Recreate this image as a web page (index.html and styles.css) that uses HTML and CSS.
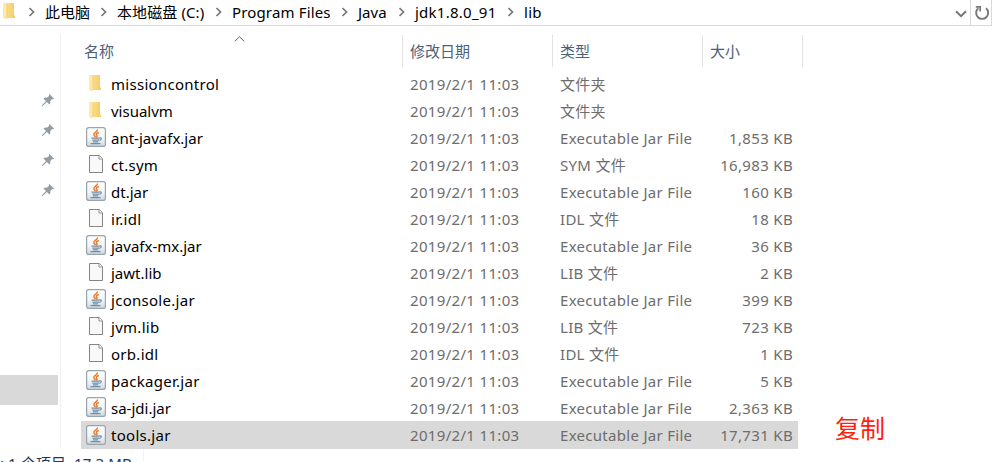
FILE: index.html
```html
<!DOCTYPE html>
<html lang="zh-CN">
<head>
<meta charset="utf-8">
<title>lib</title>
<link rel="stylesheet" href="styles.css">
</head>
<body>
<svg class="defs" aria-hidden="true">
  <defs>
    <linearGradient id="gold" x1="0" x2="1" y1="0" y2="0"><stop offset="0" stop-color="#fde397"/><stop offset="1" stop-color="#f3cc66"/></linearGradient>
    <linearGradient id="tile" x1="0" x2="0" y1="0" y2="1"><stop offset="0" stop-color="#ffffff"/><stop offset=".55" stop-color="#f3f5f6"/><stop offset="1" stop-color="#cfd7dc"/></linearGradient>
  </defs>
  <symbol id="folder" viewBox="0 0 20 20">
    <path d="M4 2h10v12.500h1V17H4z" fill="url(#gold)"/>
    <path d="M3 1.500l4 1.700v13L5 18.500 3 16.500z" fill="#ffe9a6"/>
    <path d="M7 3.200v13L5.300 18" fill="none" stroke="#e9c35c" stroke-width=".6"/>
  </symbol>
  <symbol id="jar" viewBox="0 0 20 20">
    <rect x=".6" y=".6" width="18.800" height="18.800" rx="2.200" fill="url(#tile)" stroke="#98a5b1" stroke-width="1.200"/>
    <path d="M11.300 2.500c1 2-4.300 3.200-3.400 5.300.3 1 1.100 1.500 1.700 2.200M12.800 5.500c-2.300.9-3.200 1.800-2 3 .6.800 0 1.500-.6 1.800" fill="none" stroke="#ec7426" stroke-width="1.400"/>
    <path d="M5.500 11.200h8.200M6.300 13.100h6.700M7 14.900h5.200M4.500 16.700h10M13.700 10.800c2.400-.5 2 2-.4 2.500" fill="none" stroke="#6f8fa8" stroke-width="1.200"/>
  </symbol>
  <symbol id="file" viewBox="0 0 20 20">
    <path d="M3.500 1.500h9.800l3.200 3.200v13.800h-13z" fill="#f9f9f9" stroke="#858585"/>
    <path d="M13 1.500V5h3.500" fill="#fff" stroke="#858585" stroke-width=".9"/>
  </symbol>
  <symbol id="pin" viewBox="0 0 14 14">
    <path d="M8.200.8l5 5-1.500.4-.6-.1-1.900 2.100c.4 1.300.2 2.400-.8 3.300L5.900 9 1.600 13 .8 13.200 1 12.300 5 8.100 2.500 5.600c.9-1 2-1.200 3.300-.8L8 2.900z" fill="#929ca5"/>
  </symbol>
  <symbol id="chev" viewBox="0 0 8 10"><path d="M1.500 1l4 4-4 4" fill="none" stroke="#777" stroke-width="1.700"/></symbol>
</svg>
<div class="window">
  <header class="address">
    <svg class="address-folder"><use href="#folder"/></svg>
    <nav class="crumbs">
      <span class="crumb c1"><svg><use href="#chev"/></svg><b>此电脑</b></span>
      <span class="crumb c2"><svg><use href="#chev"/></svg><b>本地磁盘 (C:)</b></span>
      <span class="crumb c3"><svg><use href="#chev"/></svg><b>Program Files</b></span>
      <span class="crumb c4"><svg><use href="#chev"/></svg><b>Java</b></span>
      <span class="crumb c5"><svg><use href="#chev"/></svg><b>jdk1.8.0_91</b></span>
      <span class="crumb c6"><svg><use href="#chev"/></svg><b>lib</b></span>
    </nav>
    <svg class="history" viewBox="0 0 12 8"><path d="M1 1.200l5 5 5-5" fill="none" stroke="#777" stroke-width="2"/></svg>
    <div class="refresh"><svg viewBox="0 0 16 16"><path d="M12 3.300A6 6 0 1 1 4.300 3.300" fill="none" stroke="#777" stroke-width="1.900"/><path d="M1.800 1.900h4.400v4.500" fill="none" stroke="#777" stroke-width="1.700"/></svg></div>
  </header>
  <div class="main">
    <aside class="sidebar">
      <svg><use href="#pin"/></svg><svg><use href="#pin"/></svg><svg><use href="#pin"/></svg><svg><use href="#pin"/></svg>
      <div class="side-selected"></div>
    </aside>
    <section class="files">
      <div class="head">
        <span class="h-name">名称<svg viewBox="0 0 11 6"><path d="M.8 5.300l4.700-4.500 4.700 4.500" fill="none" stroke="#666"/></svg></span><span>修改日期</span><span>类型</span><span class="h-size">大小</span>
      </div>
      <div class="row"><svg><use href="#folder"/></svg><span class="name wide">missioncontrol</span><span class="date">2019/2/1 11:03</span><span class="type">文件夹</span><span class="size"></span></div>
      <div class="row"><svg><use href="#folder"/></svg><span class="name">visualvm</span><span class="date">2019/2/1 11:03</span><span class="type">文件夹</span><span class="size"></span></div>
      <div class="row"><svg><use href="#jar"/></svg><span class="name">ant-javafx.jar</span><span class="date">2019/2/1 11:03</span><span class="type">Executable Jar File</span><span class="size">1,853 KB</span></div>
      <div class="row"><svg><use href="#file"/></svg><span class="name wide">ct.sym</span><span class="date">2019/2/1 11:03</span><span class="type">SYM 文件</span><span class="size">16,983 KB</span></div>
      <div class="row"><svg><use href="#jar"/></svg><span class="name">dt.jar</span><span class="date">2019/2/1 11:03</span><span class="type">Executable Jar File</span><span class="size">160 KB</span></div>
      <div class="row"><svg><use href="#file"/></svg><span class="name wide">ir.idl</span><span class="date">2019/2/1 11:03</span><span class="type">IDL 文件</span><span class="size">18 KB</span></div>
      <div class="row"><svg><use href="#jar"/></svg><span class="name">javafx-mx.jar</span><span class="date">2019/2/1 11:03</span><span class="type">Executable Jar File</span><span class="size">36 KB</span></div>
      <div class="row"><svg><use href="#file"/></svg><span class="name">jawt.lib</span><span class="date">2019/2/1 11:03</span><span class="type">LIB 文件</span><span class="size">2 KB</span></div>
      <div class="row"><svg><use href="#jar"/></svg><span class="name wide">jconsole.jar</span><span class="date">2019/2/1 11:03</span><span class="type">Executable Jar File</span><span class="size">399 KB</span></div>
      <div class="row"><svg><use href="#file"/></svg><span class="name wide">jvm.lib</span><span class="date">2019/2/1 11:03</span><span class="type">LIB 文件</span><span class="size">723 KB</span></div>
      <div class="row"><svg><use href="#file"/></svg><span class="name wide">orb.idl</span><span class="date">2019/2/1 11:03</span><span class="type">IDL 文件</span><span class="size">1 KB</span></div>
      <div class="row"><svg><use href="#jar"/></svg><span class="name wide">packager.jar</span><span class="date">2019/2/1 11:03</span><span class="type">Executable Jar File</span><span class="size">5 KB</span></div>
      <div class="row"><svg><use href="#jar"/></svg><span class="name">sa-jdi.jar</span><span class="date">2019/2/1 11:03</span><span class="type">Executable Jar File</span><span class="size">2,363 KB</span></div>
      <div class="row selected"><svg><use href="#jar"/></svg><span class="name wide">tools.jar</span><span class="date">2019/2/1 11:03</span><span class="type">Executable Jar File</span><span class="size">17,731 KB</span></div>
    </section>
    <div class="note">复制</div>
  </div>
  <footer class="status"><span>: 1 个项目&nbsp; 17.3 MB</span></footer>
</div>
</body>
</html>
```
FILE: styles.css
```css
* { box-sizing: border-box; }
body {
  margin: 0;
  background: #fff;
  font-family: "Noto Sans", "Noto Sans CJK SC", sans-serif;
  font-size: 15px;
  color: #000;
}
.defs { position: absolute; width: 0; height: 0; }
.window { width: 1001px; height: 462px; overflow: hidden; display: flex; flex-direction: column; }
svg { display: block; flex: none; }

.address {
  width: 992px;
  height: 26px;
  flex: none;
  display: flex;
  align-items: center;
  border-bottom: 1px solid #d9d9d9;
  border-right: 1px solid #d9d9d9;
}
.address-folder { width: 20px; height: 20px; margin: -3px 0 0; }
.crumbs { display: flex; flex: 1; height: 25px; padding-left: 8px; }
.crumb { display: flex; align-items: center; height: 23px; white-space: nowrap; }
.crumb svg { width: 8px; height: 10px; margin-right: 9px; }
.crumb b { font-weight: 400; }
.c1 { width: 72px; }
.c2 { width: 115px; }
.c3 { width: 126px; }
.c4 { width: 57px; }
.c5 { width: 109px; }
.c6 { width: 60px; }
.c2 b { letter-spacing: .1px; }
.c3 b { letter-spacing: .15px; }
.c5 b { letter-spacing: .25px; }
.c6 b { letter-spacing: .3px; }
.history { width: 12px; height: 8px; margin: 2px 3px 0 0; }
.refresh { width: 21px; height: 25px; border-left: 1px solid #d9d9d9; padding: 5px 0 0 3px; }
.refresh svg { width: 16px; height: 16px; }

.main { height: 423px; flex: none; display: flex; padding-top: 9px; }
.sidebar { width: 61px; border-right: 1px solid #f0f0f0; padding-top: 58px; }
.sidebar svg { width: 14px; height: 14px; margin: 0 0 16px 41px; }
.side-selected { width: 58px; height: 30px; margin-top: 178px; background: #d9d9d9; }

.files { width: 742px; }
.head { display: flex; height: 32px; margin-bottom: 3px; color: #4c607a; }
.head span { width: 150px; padding: 5px 0 0 7px; border-right: 1px solid #e2e2e2; line-height: 22px; }
.head .h-name { width: 342px; padding-left: 23px; position: relative; }
.head .h-size { width: 100px; }
.h-name svg { position: absolute; left: 173px; top: 1px; width: 11px; height: 6px; }
.row { display: flex; align-items: center; height: 27px; margin: 0 5px 0 20px; padding-left: 5px; line-height: 26px; white-space: nowrap; color: #6d6d6d; }
.row svg { width: 20px; height: 20px; margin: -1px 5px 0 0; }
.row.selected { height: 28px; }
.name { width: 299px; color: #000; }
.name.wide { letter-spacing: .28px; }
.date { width: 150px; letter-spacing: .33px; }
.type { width: 141px; letter-spacing: .29px; }
.size { flex: 1; margin-right: 5px; text-align: right; letter-spacing: .33px; }
.row.selected { background: #d9d9d9; }
.note { margin: 375px 0 0 32px; font-size: 25px; line-height: 36px; color: #ff1e10; }
.status { width: 144px; height: 13px; flex: none; overflow: hidden; border-right: 1px solid #f3f3f3; color: #1e395b; }
.status span { display: block; padding-top: 5px; line-height: 18px; white-space: pre; letter-spacing: .1px; }
```
